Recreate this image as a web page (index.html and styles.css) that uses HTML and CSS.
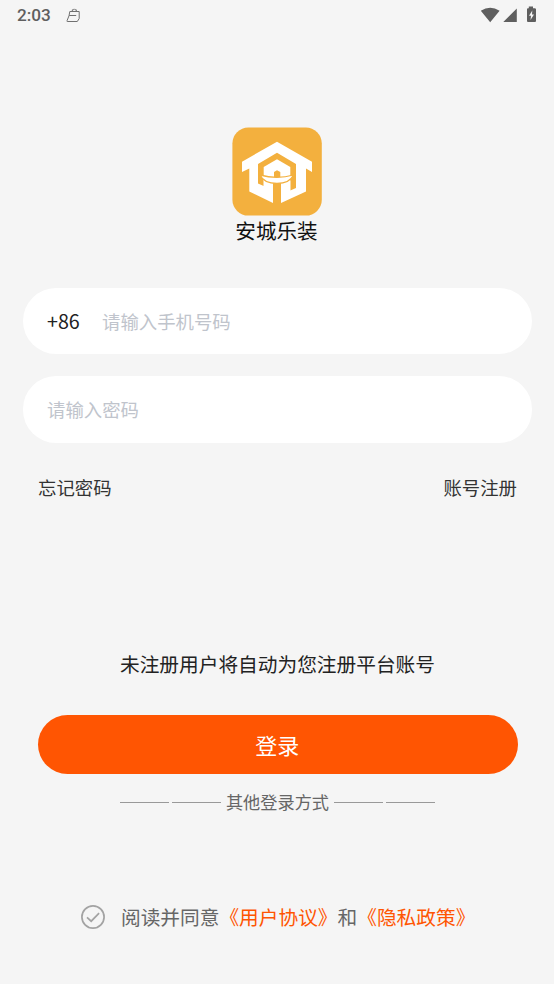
FILE: index.html
```html
<!DOCTYPE html>
<html lang="zh-CN">
<head>
<meta charset="UTF-8">
<title>安城乐装</title>
<link rel="stylesheet" href="styles.css">
</head>
<body>
<header class="status">
  <span class="time">2:03</span>
  <svg class="note" width="15" height="16" viewBox="0 0 15 16" fill="none" stroke="#707070" stroke-width="1"><path d="M3.8 3.5H13.2V10.5L11.3 13.5H1.2Q.8 13.5 1.1 12.5L3 7.8zM6.3 3.5V1.8H7.4Q8.3 0 9.2 1.8H10.3V3.5M3.2 7.5H10.2"/></svg>
  <svg class="system" width="56" height="18" viewBox="0 0 56 18" fill="#5f5f5f"><path d="M0.8 4.8Q10.2-1.5 19.6 4.8L10.2 16.2zM23.5 16V15.8L36.8 2.5V16zM48.8 .5H53V2.3H54.6Q56 2.3 56 3.3V15Q56 16 55 16H48Q47 16 47 15V3.3Q47 2.3 48 2.3H48.8z"/><path fill="#f5f5f5" d="M52.3 4.5L49 9.7H51L50.5 14L54 8.5H52z"/></svg>
</header>
<main>
  <section class="brand">
    <svg width="90" height="89" viewBox="0 0 90 89"><rect x=".4" y=".6" width="89.4" height="88" rx="16" fill="#f3b03e"/><path fill="#fff" d="M45 14.7L80 34.7V45L74 41.5V64.5L49 76V55H41V76L17.3 64.5V41.5L10 45V34.7z"/><path fill="#f3b03e" d="M45 25.7L64 37V61L58.3 63.5V54L31.7 53V59L26 56.5V37z"/><path fill="#fff" d="M45 32.3L58.3 40V52H31.7V40z"/><path fill="#f3b03e" d="M42 45L45 43.3L48.3 45V54H49V76H41V54H42z"/><path fill="#fff" d="M31.7 53H41V63H31.7zM49 53H58.3V64H49z"/><path fill="#fff" stroke="#f3b03e" stroke-width="1.3" d="M28 48Q45 52.8 61.5 48Q57.5 56.5 45 56.5Q32 56.5 28 48z"/></svg>
    <h1>安城乐装</h1>
  </section>
  <form>
    <div class="field phone"><span class="code">+86</span><span class="hint">请输入手机号码</span></div>
    <div class="field password"><span class="hint">请输入密码</span></div>
    <nav class="links"><span>忘记密码</span><span>账号注册</span></nav>
    <p class="notice">未注册用户将自动为您注册平台账号</p>
    <button type="button">登录</button>
    <div class="other"><i></i><i></i><span>其他登录方式</span><i></i><i></i></div>
    <div class="agreement">
      <svg width="24" height="24" viewBox="0 0 24 24" fill="none" stroke="#a3a3a3" stroke-width="1.7"><circle cx="12" cy="12" r="11.1"/><path d="M6 12.3L10.2 16.2L18.1 8.2"/></svg>
      <p>阅读并同意<span>《用户协议》</span>和<span>《隐私政策》</span></p>
    </div>
  </form>
</main>
</body>
</html>
```
FILE: styles.css
```css
* { box-sizing: border-box; }
body { margin: 0; height: 984px; background: #f5f5f5; color: #222; font-family: "Noto Sans CJK SC", sans-serif; overflow: hidden; }
h1, p { margin: 0; font-weight: 400; }
svg { display: block; flex: none; }
.status { display: flex; height: 32px; padding: 0 18px 0 17px; }
.time { width: 49px; font: 500 17.2px/31px Roboto, sans-serif; color: #5f5f5f; }
.note { margin-top: 8px; }
.system { margin: 6px 0 0 auto; }
.brand { display: flex; flex-direction: column; align-items: center; padding-top: 95px; }
h1 { margin: -1px 1px 0 0; font-size: 20.6px; line-height: 30px; color: #111; }
.field { display: flex; align-items: center; width: 509px; height: 66px; margin-left: 23px; padding: 0 0 1px 24px; border-radius: 33px; background: #fff; }
.phone { margin-top: 43px; }
.password { margin-top: 22px; height: 67px; padding-bottom: 2px; }
.code { width: 55px; font-size: 19.7px; }
.hint { font-size: 18.4px; color: #c0c4cc; }
.links { display: flex; justify-content: space-between; margin: 29px 37px 0 38px; font-size: 18.4px; line-height: 30px; color: #333; }
.notice { margin: 147px 0 0 1px; text-align: center; font-size: 19.7px; line-height: 30px; }
button { display: block; width: 480.5px; height: 59px; margin: 36px 0 0 37.5px; padding: 0 1px 0 0; border: 0; border-radius: 30px; background: #ff5502; color: #fff; font: 22px/59px "Noto Sans CJK SC", sans-serif; }
.other { display: flex; align-items: center; justify-content: center; gap: 3px; margin: 13px 0 0 1px; font-size: 17.2px; line-height: 30px; color: #666; }
.other i { width: 49px; height: 1px; background: #999; }
.other span { margin: 0 2px; }
.agreement { display: flex; align-items: center; margin: 85px 0 0 81px; font-size: 19.7px; line-height: 30px; color: #666; }
.agreement p { margin-left: 16px; white-space: nowrap; }
.agreement span { color: #ff5502; }
```
